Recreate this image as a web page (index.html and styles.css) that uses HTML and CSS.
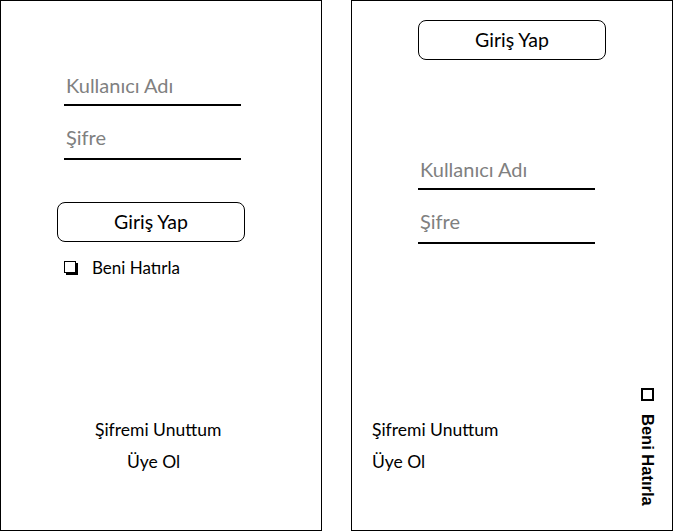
FILE: index.html
```html
<!DOCTYPE html>
<html lang="tr">
<head>
<meta charset="utf-8">
<title>Giriş</title>
<link rel="stylesheet" href="styles.css">
</head>
<body>
<div class="screens">
  <section class="panel panel-a">
    <div class="field field-first"><span class="ph">Kullanıcı Adı</span></div>
    <div class="field field-second"><span class="ph">Şifre</span></div>
    <div class="btn btn-a">Giriş Yap</div>
    <div class="remember"><span class="box"></span><span class="remember-text">Beni Hatırla</span></div>
    <div class="link link-forgot-a">Şifremi Unuttum</div>
    <div class="link link-join-a">Üye Ol</div>
  </section>
  <section class="panel panel-b">
    <div class="btn btn-b">Giriş Yap</div>
    <div class="field field-b1"><span class="ph">Kullanıcı Adı</span></div>
    <div class="field field-second field-b2"><span class="ph">Şifre</span></div>
    <div class="bottom-b">
      <div class="links-b">
        <div class="link">Şifremi Unuttum</div>
        <div class="link link-join-b">Üye Ol</div>
      </div>
      <div class="vremember"><span class="vbox"></span><span class="vtext">Beni Hatırla</span></div>
    </div>
  </section>
</div>
</body>
</html>
```
FILE: styles.css
```css
html, body {
  margin: 0;
  padding: 0;
  background: #fff;
}
body {
  font-family: "Lato", "Open Sans", sans-serif;
  color: #000;
}
.screens {
  display: flex;
  gap: 29px;
}
.panel {
  box-sizing: border-box;
  width: 322px;
  height: 531px;
  border: 1px solid #000;
  display: flex;
  flex-direction: column;
  align-items: flex-start;
}
.field {
  box-sizing: border-box;
  width: 177px;
  height: 36px;
  border-bottom: 2px solid #000;
  display: flex;
  align-items: center;
  padding-left: 2px;
  padding-bottom: 4px;
}
.ph {
  font-size: 20px;
  color: #808080;
}
.field-first {
  margin-top: 69px;
  margin-left: 63px;
}
.field-second {
  margin-top: 18px;
  margin-left: 63px;
  padding-bottom: 8px;
}
.btn {
  box-sizing: border-box;
  width: 188px;
  height: 40px;
  border: 1px solid #000;
  border-radius: 8px;
  display: flex;
  align-items: center;
  justify-content: center;
  font-size: 19.5px;
  padding-bottom: 1px;
}
.btn-a {
  margin-top: 42px;
  margin-left: 56px;
}
.remember {
  margin-top: 15px;
  margin-left: 63px;
  height: 20px;
  display: flex;
  align-items: center;
}
.box {
  box-sizing: border-box;
  width: 12px;
  height: 12px;
  border: 1.5px solid #000;
  box-shadow: 2px 2px 0 #000;
}
.remember-text {
  margin-left: 16px;
  font-size: 17px;
}
.link {
  font-size: 17.5px;
  line-height: 22px;
}
.link-forgot-a {
  margin-top: 142px;
  margin-left: 94px;
}
.link-join-a {
  margin-top: 10px;
  margin-left: 126px;
}
.btn-b {
  margin-top: 19px;
  margin-left: 66px;
}
.field-b1 {
  margin-top: 94px;
  margin-left: 66px;
}
.field-b2 {
  margin-left: 66px;
}
.bottom-b {
  display: flex;
  justify-content: space-between;
  align-items: flex-start;
  width: 100%;
  margin-top: 144px;
}
.links-b {
  margin-top: 31px;
  margin-left: 20px;
}
.link-join-b {
  margin-top: 10px;
}
.vremember {
  writing-mode: vertical-rl;
  display: flex;
  align-items: center;
  margin-right: 15px;
  font-family: "Liberation Sans", Arial, sans-serif;
  font-weight: bold;
  font-size: 16.5px;
}
.vbox {
  box-sizing: border-box;
  width: 13px;
  height: 13px;
  border: 2px solid #000;
}
.vtext {
  margin-top: 13px;
}
```
